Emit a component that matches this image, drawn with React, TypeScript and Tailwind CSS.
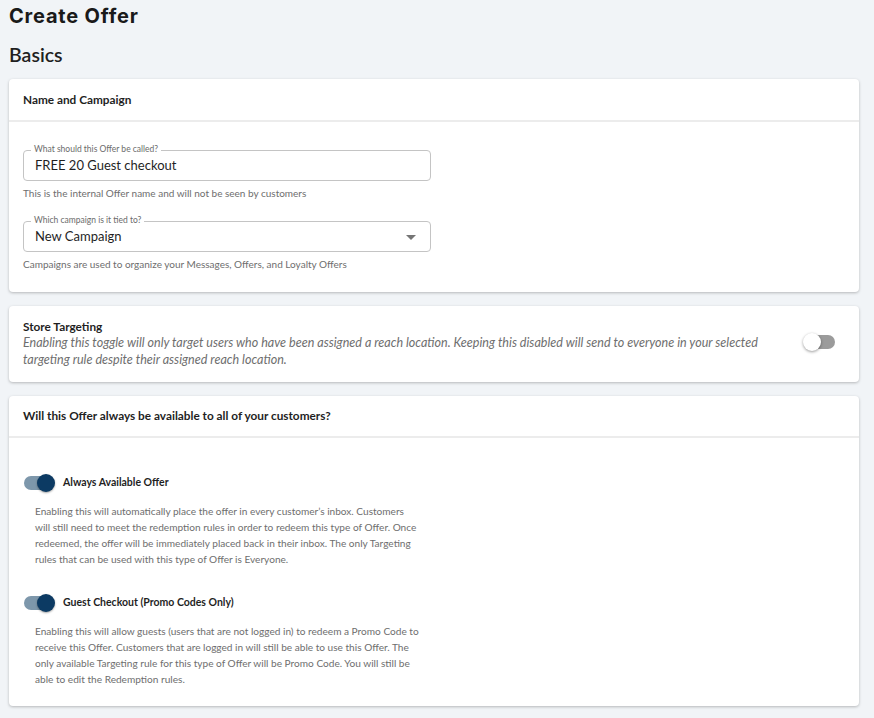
import React from 'react';

function Toggle({ on }: { on: boolean }) {
  return (
    <div className="relative h-[18px] w-[32px] shrink-0">
      <div
        className={
          on
            ? 'absolute left-0 top-[2px] h-[14px] w-[30px] rounded-full bg-[#7d97ab]'
            : 'absolute left-[2px] top-[2px] h-[14px] w-[30px] rounded-full bg-[#9b9b9b]'
        }
      />
      <div
        className={
          on
            ? 'absolute left-[13px] top-0 h-[18px] w-[18px] rounded-full bg-[#0c3a63] shadow-[0_1px_2px_rgba(0,0,0,0.35)]'
            : 'absolute left-0 top-0 h-[18px] w-[18px] rounded-full bg-white shadow-[0_1px_3px_rgba(0,0,0,0.4)]'
        }
      />
    </div>
  );
}

function OutlinedField({ label, value, select }: { label: string; value: string; select?: boolean }) {
  return (
    <div className="relative w-[408px]">
      <div className="flex h-[31px] items-center justify-between rounded-[4px] border border-[#c4c4c4] pl-[11px] pr-[14px] text-[13px] text-[#1f1f1f]">
        <span>{value}</span>
        {select && (
          <svg width="10" height="5" viewBox="0 0 10 5" className="mt-[1px]">
            <path d="M0 0 L10 0 L5 5 Z" fill="#757575" />
          </svg>
        )}
      </div>
      <span className="absolute left-[8px] top-[-6px] bg-white px-[3px] text-[8.5px] leading-[11px] text-[#6b6b6b]">
        {label}
      </span>
    </div>
  );
}

function OptionBlock({ title, text }: { title: string; text: string }) {
  return (
    <div>
      <div className="flex items-center gap-[7px] pl-[15px]">
        <Toggle on />
        <span className="text-[10.5px] font-bold text-[#1f1f1f]">{title}</span>
      </div>
      <p className="mt-[11px] w-[411px] pl-[26px] text-[10.1px] leading-[16px] text-[#6e6e6e]">{text}</p>
    </div>
  );
}

export default function App() {
  return (
    <div className="min-h-[718px] bg-[#f1f4f7] pb-[12px] pl-[9px] pr-[15px] font-['Lato',sans-serif]">
      <h1 className="pt-[4px] font-['Inter',sans-serif] text-[20px] font-bold leading-[24px] tracking-[0.04em] text-[#1a1a1a]">
        Create Offer
      </h1>
      <h2 className="mt-[15px] text-[19.5px] font-semibold leading-[24px] text-[#1f1f1f]">Basics</h2>

      <div className="mt-[12px] flex flex-col gap-[14px]">
        <section className="rounded-[4px] bg-white shadow-[0_1px_3px_rgba(0,0,0,0.25)]">
          <div className="flex h-[43px] items-center border-b-2 border-[#ececec] px-[14px] text-[11.8px] font-bold text-[#1f1f1f]">
            Name and Campaign
          </div>
          <div className="px-[14px] pb-[21px] pt-[28px]">
            <OutlinedField label="What should this Offer be called?" value="FREE 20 Guest checkout" />
            <p className="mt-[5px] text-[10px] leading-[14px] text-[#6e6e6e]">
              This is the internal Offer name and will not be seen by customers
            </p>
            <div className="mt-[21px]">
              <OutlinedField label="Which campaign is it tied to?" value="New Campaign" select />
            </div>
            <p className="mt-[5px] text-[10px] leading-[14px] text-[#6e6e6e]">
              Campaigns are used to organize your Messages, Offers, and Loyalty Offers
            </p>
          </div>
        </section>

        <section className="flex items-start justify-between rounded-[4px] bg-white py-[14px] pl-[14px] pr-[24px] shadow-[0_1px_3px_rgba(0,0,0,0.25)]">
          <div className="w-[760px]">
            <div className="text-[11.8px] font-bold leading-[14px] text-[#1f1f1f]">Store Targeting</div>
            <p className="text-[12.55px] italic leading-[17px] text-[#6e6e6e]">
              Enabling this toggle will only target users who have been assigned a reach location. Keeping this
              disabled will send to everyone in your selected targeting rule despite their assigned reach location.
            </p>
          </div>
          <div className="mt-[13px]">
            <Toggle on={false} />
          </div>
        </section>

        <section className="rounded-[4px] bg-white shadow-[0_1px_3px_rgba(0,0,0,0.25)]">
          <div className="flex h-[42px] items-center border-b-2 border-[#ececec] px-[14px] text-[11.8px] font-bold text-[#1f1f1f]">
            Will this Offer always be available to all of your customers?
          </div>
          <div className="flex flex-col gap-[27px] pb-[19px] pt-[36px]">
            <OptionBlock
              title="Always Available Offer"
              text="Enabling this will automatically place the offer in every customer’s inbox. Customers will still need to meet the redemption rules in order to redeem this type of Offer. Once redeemed, the offer will be immediately placed back in their inbox. The only Targeting rules that can be used with this type of Offer is Everyone."
            />
            <OptionBlock
              title="Guest Checkout (Promo Codes Only)"
              text="Enabling this will allow guests (users that are not logged in) to redeem a Promo Code to receive this Offer. Customers that are logged in will still be able to use this Offer. The only available Targeting rule for this type of Offer will be Promo Code. You will still be able to edit the Redemption rules."
            />
          </div>
        </section>
      </div>
    </div>
  );
}
